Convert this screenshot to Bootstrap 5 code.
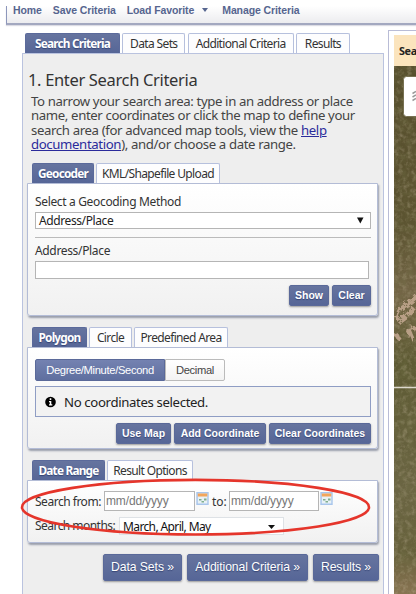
<!DOCTYPE html>
<html lang="en">
<head>
<meta charset="utf-8">
<meta name="viewport" content="width=device-width, initial-scale=1">
<title>Search Criteria</title>
<link href="https://cdn.jsdelivr.net/npm/bootstrap@5.3.0/dist/css/bootstrap.min.css" rel="stylesheet">
<style>
body{font-family:"Noto Sans","Open Sans",sans-serif;font-size:12px;line-height:16px;letter-spacing:-.34px;color:#333;background:#fff;width:416px;height:594px;overflow:hidden}
.topnav{margin:6px 0 0 6px;height:19px;border-left:1px solid #8d97bb;border-bottom:2px solid #a3a8c0;background:linear-gradient(#fff,#ececef);font:bold 10.5px/14px "Liberation Sans",Arial,sans-serif;letter-spacing:-.1px;padding-left:6px;box-shadow:0 1px 1px #dcdce4;flex-wrap:nowrap}
.topnav .nav-link{color:#56658f;padding:0;margin-right:11px;line-height:9px;white-space:nowrap}
.caret{display:inline-block;border:3.5px solid transparent;border-top:4px solid #56658f;border-bottom:0;margin:0 3px 0 8px;vertical-align:2px}
.leftcol{width:362px;margin-left:22px;padding-top:8px;height:569px;flex:none}
.tabrow{height:20px;gap:2px;padding-left:5px;flex-wrap:nowrap}
.tabrow.main{padding-left:3px;gap:2.3px}
.tabrow .nav-link{flex:none;height:20px;padding:0;text-align:center;border:1px solid #b6c0dd;border-bottom:0;border-radius:2px 2px 0 0;background:#fdfdfe;color:#333;line-height:19px;letter-spacing:-.64px;white-space:nowrap}
.tabrow .nav-link.active{background:linear-gradient(#66749f,#566697);color:#fff;border-color:#5b6a9b;font-weight:700;font-size:11.8px;letter-spacing:-.78px;text-shadow:0 1px 1px #354474}
.w39{width:39px}.w40{width:40px}.w43{width:43px}.w54{width:54px}.w55{width:55px}.w62{width:62px}.w63{width:63px}.w66{width:66px}.w73{width:73px}.w79{width:79px}.w86{width:86px}.w92{width:92px}.w94{width:94px}.w95{width:95px}.w102{width:102px}.w106{width:106px}.w121{width:121px}.w124{width:124px}
.outer{background:#eee;border:1px solid #bac3df;border-bottom:0;height:541px;padding:0 4px}
h1{font-size:16.5px;line-height:22px;margin:15px 0 0 1px;font-weight:400;color:#333}
.intro{font-size:13.2px;line-height:14.4px;letter-spacing:-.37px;margin:3px 0 0 4px;white-space:nowrap;height:61px;color:#444}
.intro a{color:#2b2b9b}
.sec{border:1px solid #b3bcd6;border-radius:0 0 3px 3px;background:linear-gradient(#fff,#f1f1f1);box-shadow:1px 2px 2px #999eab;width:351px;padding:0 6px 0 7px}
.geo{height:133px}.poly{height:102px}.dates{height:63px}
.gap11{margin-top:11px}
.geolabel{padding-top:10px}
.fld{border:1px solid #b5b5b5;background:#fff}
.pick{height:17px;line-height:15px;margin-top:2px;padding:0 3px;color:#222;letter-spacing:-.4px}
.rule{border-top:1px solid #bbb;margin:8px 0 5px}
.addr{height:18px;width:334px;margin-top:2px}
.btn.act{background:linear-gradient(#66749f,#566697);color:#fff;border:1px solid #5a6999;border-radius:2px;font:bold 10.5px/19px "Liberation Sans",Arial,sans-serif;letter-spacing:0;padding:0;height:21px;text-shadow:0 1px 1px #354474;box-shadow:0 1px 2px #999;white-space:nowrap;flex:none}
.btn.big{font-weight:400;font-size:12.2px;letter-spacing:-.08px;height:27px;line-height:25px}
.acts{gap:3px;margin-top:6px}
.bigacts{gap:5px;margin-top:11px}
.seg{height:22px;line-height:20px;font-family:"Liberation Sans",Arial,sans-serif;font-size:11.2px;text-align:center;border:1px solid #bbb;border-radius:0 2px 2px 0;background:linear-gradient(#fff,#f3f3f3);width:60px;color:#444}
.seg.on{width:130px;color:#fff;border-color:#5a6999;border-radius:2px 0 0 2px;background:linear-gradient(#7482b1,#5f6f9f)}
.notice{height:31px;border:1px solid #8f9dc4;background:#f2f2f2;margin-top:5px;padding-left:9px;color:#222;font-size:13.2px;letter-spacing:-.36px}
.daterow{padding-top:10px;line-height:21px;white-space:nowrap;letter-spacing:-.48px}
.from{width:69px}.to{width:17px;letter-spacing:-.1px}
.dateinp{height:20px;width:91px;border:1px solid #b5b5b5;background:#fff;color:#777;font:12px/19px "Liberation Sans",Arial,sans-serif;letter-spacing:-.15px;padding-left:1px}
.dateinp.end{width:90px}
.cal{margin:0 2px 0 1px}
.monthrow{margin-top:5px;line-height:18px;letter-spacing:-.54px}
.monthlabel{width:84px}
.months{width:165px;height:18px;line-height:17px;padding:0 6px 0 3px;color:#111;letter-spacing:-.62px}
.mapcol{margin:5px 0 0 4px;border:1px solid #b9bcd6;border-right:0;border-bottom:0;padding:4px 0 0 5px;width:28px;height:564px;flex:none;overflow:hidden}
.maphead{height:31px;background:#fbe4bd;font-weight:700;font-size:10.8px;line-height:31px;padding-left:5px;white-space:nowrap;color:#222}
.mapview{height:530px}
.ring{position:absolute;left:0;top:470px;pointer-events:none}
</style>
<script src="https://cdn.jsdelivr.net/npm/bootstrap@5.3.0/dist/js/bootstrap.bundle.min.js"></script>
</head>
<body>
<nav class="nav topnav">
<a class="nav-link">Home</a><a class="nav-link">Save Criteria</a><a class="nav-link">Load Favorite<span class="caret"></span></a><a class="nav-link">Manage Criteria</a>
</nav>
<div class="d-flex">
<main class="leftcol">
<div class="nav tabrow main">
<a class="nav-link active w95">Search Criteria</a><a class="nav-link w63">Data Sets</a><a class="nav-link w106">Additional Criteria</a><a class="nav-link w54">Results</a>
</div>
<div class="outer">
<h1>1. Enter Search Criteria</h1>
<p class="intro">To narrow your search area: type in an address or place<br>name, enter coordinates or click the map to define your<br>search area (for advanced map tools, view the <a href="#">help</a><br><a href="#">documentation</a>), and/or choose a date range.</p>

<div class="nav tabrow mt-2"><a class="nav-link active w62">Geocoder</a><a class="nav-link w124">KML/Shapefile Upload</a></div>
<section class="sec geo">
<label class="d-block geolabel">Select a Geocoding Method</label>
<div class="fld pick d-flex justify-content-between"><span>Address/Place</span><svg width="13" height="15"><path d="M3 4.500h6.500l-3.200 6z" fill="#111"/></svg></div>
<div class="rule"></div>
<label class="d-block">Address/Place</label>
<div class="fld addr"></div>
<div class="acts d-flex justify-content-end"><a class="btn act w40">Show</a><a class="btn act w39">Clear</a></div>
</section>

<div class="nav tabrow gap11"><a class="nav-link active w55">Polygon</a><a class="nav-link w43">Circle</a><a class="nav-link w94">Predefined Area</a></div>
<section class="sec poly">
<div class="d-flex gap11"><span class="seg on">Degree/Minute/Second</span><span class="seg">Decimal</span></div>
<div class="notice d-flex align-items-center"><svg width="11" height="12" class="me-2"><circle cx="5.5" cy="6" r="5.3" fill="#000"/><path d="M4 5h2.300v3.300h1V9.500H4V8.300h.8V6.200H4zM4.700 2.300h1.600v1.600H4.700z" fill="#fff"/></svg>No coordinates selected.</div>
<div class="acts d-flex justify-content-end"><a class="btn act w55">Use Map</a><a class="btn act w92">Add Coordinate</a><a class="btn act w102">Clear Coordinates</a></div>
</section>

<div class="nav tabrow gap11"><a class="nav-link active w73">Date Range</a><a class="nav-link w86">Result Options</a></div>
<section class="sec dates">
<div class="daterow d-flex"><span class="from">Search from:</span><span class="dateinp">mm/dd/yyyy</span>
<svg width="14" height="18" class="cal"><use href="#cal"/></svg>
<span class="to">to:</span><span class="dateinp end">mm/dd/yyyy</span>
<svg width="14" height="18" class="cal"><g id="cal"><rect x=".3" y="1" width="12.400" height="13" fill="#a9c6ec"/><rect x="1.800" y="2.500" width="9.500" height="10" fill="#e9f1f6"/><rect x="1.800" y="2.500" width="9.500" height="3" fill="#f2a65c"/><path d="M3 8h2.500v1.500H3zM8 7.500h2.500v2H8zM5.500 10h2.500v1.500H5.500z" fill="#7fae8c"/></g></svg></div>
<div class="monthrow d-flex"><span class="monthlabel">Search months:</span><span class="months bg-white d-flex justify-content-between border">March, April, May<svg width="10" height="16"><path d="M1 7h7L4.500 11z" fill="#111"/></svg></span></div>
</section>
<div class="bigacts d-flex justify-content-end"><a class="btn act big w79">Data Sets »</a><a class="btn act big w121">Additional Criteria »</a><a class="btn act big w66">Results »</a></div>
</div>
</main>
<aside class="mapcol"><div class="maphead">Search Area</div>
<div class="mapview"><svg width="22" height="530">
<defs>
<linearGradient id="land" x2="0" y2="1"><stop offset="0" stop-color="#574f2d"/><stop offset=".3" stop-color="#5c5431"/><stop offset=".43" stop-color="#736546"/><stop offset=".56" stop-color="#5d5a33"/><stop offset=".8" stop-color="#6b6543"/><stop offset=".92" stop-color="#66603b"/><stop offset="1" stop-color="#8a7453"/></linearGradient>
<filter id="grain" x="0" y="0" width="100%" height="100%"><feTurbulence type="fractalNoise" baseFrequency=".22" numOctaves="3" seed="4"/><feColorMatrix values="0 0 0 0 .7  0 0 0 0 .6  0 0 0 0 .45  1.600 0 0 0 -.7"/></filter>
<filter id="shade" x="0" y="0" width="100%" height="100%"><feTurbulence type="fractalNoise" baseFrequency=".15" numOctaves="3" seed="9"/><feColorMatrix values="0 0 0 0 .2  0 0 0 0 .2  0 0 0 0 .08  1.800 0 0 0 -.7"/></filter>
<filter id="rough"><feTurbulence type="fractalNoise" baseFrequency=".25" numOctaves="2"/><feDisplacementMap in="SourceGraphic" scale="9"/><feGaussianBlur stdDeviation=".6"/></filter>
</defs>
<rect width="22" height="530" fill="url(#land)"/><rect width="22" height="530" filter="url(#grain)" opacity=".4"/><rect width="22" height="530" filter="url(#shade)" opacity=".35"/>
<g filter="url(#rough)" fill="none" stroke="#b89f86" stroke-width="4"><path d="M26 228L14 238 6 243 2 252M4 256l8-6 8-8M14 262l5 12M2 268l4 6M24 264l-8-3"/></g>
<path d="M0 321.500h22" stroke="#ddd9cd" stroke-width="1.500"/>
<rect x="9.500" y="10.500" width="20" height="40" rx="3" fill="#fff" stroke="#777152"/><path d="M18.500 27.500l3.500-2M18.500 31l3.500-2M18.500 34.500l3.500-2" stroke="#999" stroke-width="1.500"/>
</svg></div></aside>
</div>
<svg class="ring" width="390" height="80"><ellipse cx="195.500" cy="37.200" rx="173.500" ry="27.300" fill="none" stroke="#e5352b" stroke-width="2.600"/></svg>
</body>
</html>
